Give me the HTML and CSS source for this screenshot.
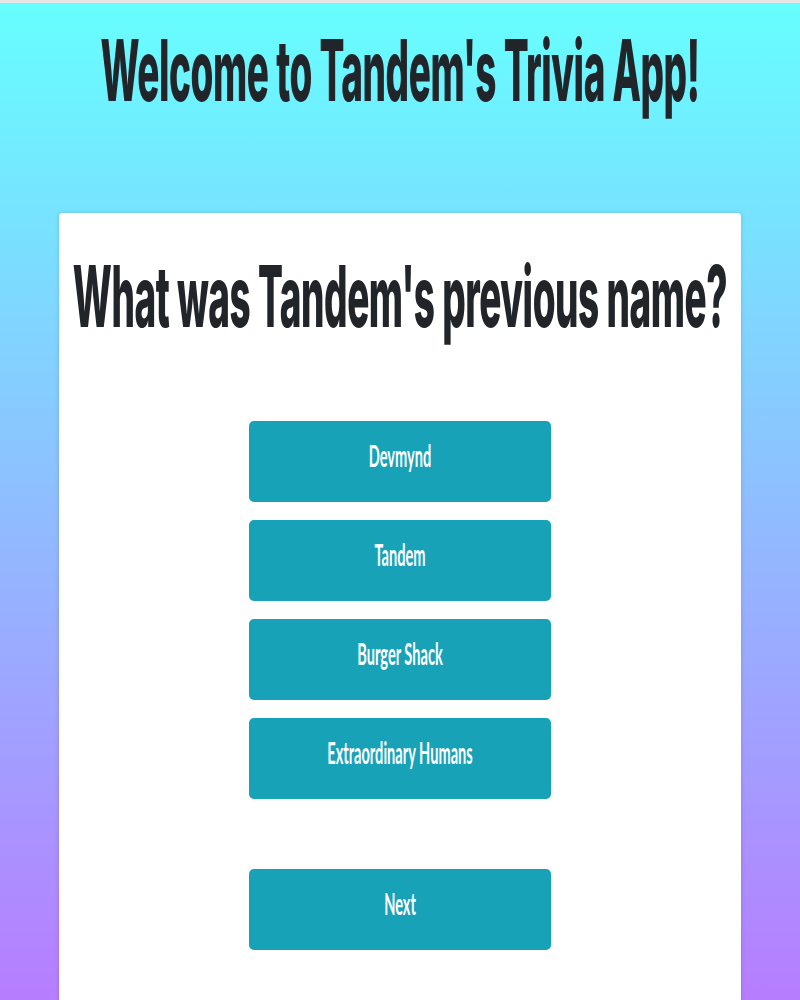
FILE: index.html
```html
<!DOCTYPE html>
<html lang="en">
<head>
<meta charset="utf-8">
<title>Tandem Trivia</title>
<link rel="stylesheet" href="styles.css">
</head>
<body>
<div class="page">
  <h1 class="app-title"><span class="tall">Welcome to Tandem's Trivia App!</span></h1>
  <main class="card">
    <h2 class="question"><span class="tall">What was Tandem's previous name?</span></h2>
    <div class="answers">
      <button class="btn"><span class="btn-label">Devmynd</span></button>
      <button class="btn"><span class="btn-label">Tandem</span></button>
      <button class="btn"><span class="btn-label">Burger Shack</span></button>
      <button class="btn"><span class="btn-label">Extraordinary Humans</span></button>
    </div>
    <div class="actions">
      <button class="btn"><span class="btn-label">Next</span></button>
    </div>
  </main>
</div>
</body>
</html>
```
FILE: styles.css
```css
html, body {
  margin: 0;
  padding: 0;
  height: 100%;
}
body {
  background: linear-gradient(180deg, #66ffff 0%, #b77dff 100%);
  border-top: 3px solid #e6e6e6;
  box-sizing: border-box;
  overflow: hidden;
  font-family: Inter, "Liberation Sans", sans-serif;
  color: #212529;
}
.page {
  display: flex;
  flex-direction: column;
  align-items: center;
}
.app-title,
.question {
  display: flex;
  justify-content: center;
  font-size: 36.9px;
  line-height: 1;
  font-weight: 800;
  white-space: nowrap;
}
.app-title {
  margin: 51px 0 0;
}
.tall {
  display: inline-block;
  transform: scaleY(2.304);
  letter-spacing: -0.43px;
}
.card {
  margin-top: 122px;
  width: 682px;
  min-height: 900px;
  background: #fff;
  border-radius: 4px;
  box-shadow: 0 0 4px rgba(0, 0, 0, 0.15);
  padding-top: 67px;
  display: flex;
  flex-direction: column;
  align-items: center;
}
.question {
  margin: 0;
}
.answers {
  margin-top: 104px;
  display: flex;
  flex-direction: column;
  gap: 18px;
}
.actions {
  margin-top: 70px;
}
.btn {
  width: 302px;
  height: 81px;
  border: none;
  border-radius: 5px;
  background: #17a2b8;
  color: #fff;
  font-family: Lato, "Open Sans", sans-serif;
  font-weight: 700;
  font-size: 14.6px;
  line-height: 1;
  padding: 0 0 9px;
  display: flex;
  align-items: center;
  justify-content: center;
  white-space: nowrap;
}
.btn-label {
  display: inline-block;
  transform: scaleY(2.128);
}
```
